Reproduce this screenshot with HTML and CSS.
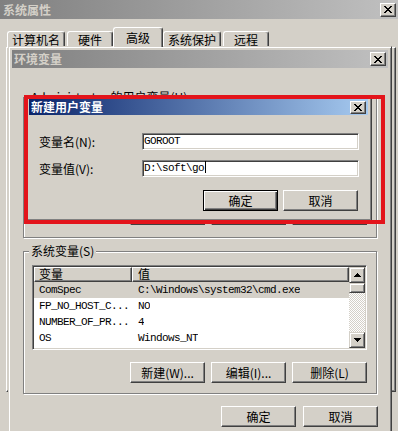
FILE: index.html
```html
<!DOCTYPE html>
<html lang="zh-CN">
<head>
<meta charset="utf-8">
<title>环境变量</title>
<link rel="stylesheet" href="styles.css">
</head>
<body>
<div class="stage">

  <div class="win sysprops">
    <div class="titlebar inactive">
      <span class="title">系统属性</span>
      <span class="xbtn"><svg width="8" height="7" viewBox="0 0 8 7"><path d="M0 0h2v1h-2zM6 0h2v1h-2zM1 1h2v1h-2zM5 1h2v1h-2zM2 2h4v1h-4zM3 3h2v1h-2zM2 4h4v1h-4zM1 5h2v1h-2zM5 5h2v1h-2zM0 6h2v1h-2zM6 6h2v1h-2z" fill="#000"/></svg></span>
    </div>
    <div class="tabs">
      <div class="tab">计算机名</div>
      <div class="tab w2">硬件</div>
      <div class="tab sel">高级</div>
      <div class="tab">系统保护</div>
      <div class="tab w2">远程</div>
    </div>
    <div class="tabpanel"></div>
  </div>

  <div class="win envvars">
    <div class="titlebar inactive">
      <span class="title">环境变量</span>
      <span class="xbtn"><svg width="8" height="7" viewBox="0 0 8 7"><path d="M0 0h2v1h-2zM6 0h2v1h-2zM1 1h2v1h-2zM5 1h2v1h-2zM2 2h4v1h-4zM3 3h2v1h-2zM2 4h4v1h-4zM1 5h2v1h-2zM5 5h2v1h-2zM0 6h2v1h-2zM6 6h2v1h-2z" fill="#000"/></svg></span>
    </div>
    <div class="env-body">
      <fieldset class="group user-group">
        <legend>Administrator 的用户变量(U)</legend>
        <div class="listview">
          <div class="lv-main">
            <div class="lv-head"><div class="col c1">变量</div><div class="col c2">值</div></div>
            <div class="lv-row mono"><span class="c1">TEMP</span><span class="c2">%USERPROFILE%\AppData\Local\Temp</span></div>
            <div class="lv-row mono"><span class="c1">TMP</span><span class="c2">%USERPROFILE%\AppData\Local\Temp</span></div>
          </div>
        </div>
        <div class="btnrow">
          <button class="btn">新建(N)...</button>
          <button class="btn">编辑(E)...</button>
          <button class="btn">删除(D)</button>
        </div>
      </fieldset>

      <fieldset class="group sys-group">
        <legend>系统变量(S)</legend>
        <div class="listview">
          <div class="lv-main">
            <div class="lv-head"><div class="col c1">变量</div><div class="col c2">值</div></div>
            <div class="lv-row mono sel"><span class="c1">ComSpec</span><span class="c2">C:\Windows\system32\cmd.exe</span></div>
            <div class="lv-row mono"><span class="c1">FP_NO_HOST_C...</span><span class="c2">NO</span></div>
            <div class="lv-row mono"><span class="c1">NUMBER_OF_PR...</span><span class="c2">4</span></div>
            <div class="lv-row mono"><span class="c1">OS</span><span class="c2">Windows_NT</span></div>
          </div>
          <div class="vscroll">
            <div class="sb-btn"><svg width="7" height="4" viewBox="0 0 7 4"><path d="M3 0h1v1h-1zM2 1h3v1h-3zM1 2h5v1h-5zM0 3h7v1h-7z" fill="#000"/></svg></div>
            <div class="sb-track"><div class="sb-thumb"></div></div>
            <div class="sb-btn"><svg width="7" height="4" viewBox="0 0 7 4"><path d="M0 0h7v1h-7zM1 1h5v1h-5zM2 2h3v1h-3zM3 3h1v1h-1z" fill="#000"/></svg></div>
          </div>
        </div>
        <div class="btnrow">
          <button class="btn">新建(W)...</button>
          <button class="btn">编辑(I)...</button>
          <button class="btn">删除(L)</button>
        </div>
      </fieldset>

      <div class="env-footer">
        <button class="btn">确定</button>
        <button class="btn">取消</button>
      </div>
    </div>
  </div>

  <div class="win newvar">
    <div class="titlebar active">
      <span class="title">新建用户变量</span>
      <span class="xbtn"><svg width="8" height="7" viewBox="0 0 8 7"><path d="M0 0h2v1h-2zM6 0h2v1h-2zM1 1h2v1h-2zM5 1h2v1h-2zM2 2h4v1h-4zM3 3h2v1h-2zM2 4h4v1h-4zM1 5h2v1h-2zM5 5h2v1h-2zM0 6h2v1h-2zM6 6h2v1h-2z" fill="#000"/></svg></span>
    </div>
    <div class="nv-body">
      <div class="field">
        <label class="field-label">变量名(N):</label>
        <div class="input mono">GOROOT</div>
      </div>
      <div class="field">
        <label class="field-label">变量值(V):</label>
        <div class="input mono">D:\soft\go<span class="caret"></span></div>
      </div>
      <div class="nv-buttons">
        <button class="btn default">确定</button>
        <button class="btn">取消</button>
      </div>
    </div>
  </div>

  <div class="redbox"></div>
</div>
</body>
</html>
```

FILE: styles.css
```css
* { box-sizing: border-box; }
html, body { margin: 0; padding: 0; }
body {
  background: #d4d0c8;
  font-family: "Noto Sans CJK SC", "Liberation Sans", sans-serif;
  font-size: 12px;
  line-height: 14px;
  color: #000;
}
.stage {
  position: relative;
  width: 398px;
  height: 431px;
  overflow: hidden;
}

/* windows */
.win {
  position: absolute;
  display: flex;
  flex-direction: column;
  background: #d4d0c8;
  border: 1px solid;
  border-color: #d4d0c8 #404040 #404040 #d4d0c8;
  box-shadow: inset 1px 1px #fff, inset -1px -1px #808080;
  padding: 3px;
}
.sysprops { left: -4px; top: -4px; width: 406px; height: 450px; }
.envvars { left: 8px; top: 46px; width: 384px; height: 400px; }
.newvar { left: 25px; top: 95px; width: 347px; height: 126px; }

.titlebar {
  flex: none;
  display: flex;
  align-items: center;
  justify-content: space-between;
  height: 18px;
  padding: 0 2px 0 2px;
}
.sysprops .titlebar { height: 19px; padding-left: 3px; }
.newvar .titlebar { height: 16px; }
.titlebar .title { font-weight: bold; line-height: 14px; }
.titlebar.inactive { background: linear-gradient(to right, #808080, #c0c0c0); color: #d4d0c8; }
.titlebar.active { background: linear-gradient(to right, #0a246a, #a6caf0); color: #fff; }

.xbtn {
  width: 16px;
  height: 14px;
  background: #d4d0c8;
  border: 1px solid;
  border-color: #fff #404040 #404040 #fff;
  box-shadow: inset -1px -1px #808080;
  display: flex;
  align-items: center;
  justify-content: center;
}
.newvar .xbtn { height: 13px; }
.xbtn svg, .sb-btn svg { display: block; }

/* tabs */
.tabs {
  flex: none;
  display: flex;
  align-items: flex-end;
  gap: 2px;
  height: 20px;
  margin-top: 8px;
  padding-left: 7px;
}
.tab {
  width: 58px;
  height: 16px;
  border: 1px solid;
  border-bottom: 0;
  border-color: #fff #404040 #fff #fff;
  border-radius: 3px 3px 0 0;
  box-shadow: inset -1px 0 #808080;
  display: flex;
  align-items: center;
  justify-content: center;
}
.tab.w2 { width: 46px; }
.tab.sel {
  width: 50px;
  height: 20px;
  margin: 0 -2px;
  position: relative;
  z-index: 1;
  background: #d4d0c8;
}
.tabpanel {
  flex: none;
  height: 345px;
  margin: 0 2px 0 6px;
  border: 1px solid;
  border-color: #fff #404040 #404040 #fff;
  box-shadow: inset -1px -1px #808080;
}

/* environment dialog body */
.env-body {
  display: flex;
  flex-direction: column;
  padding: 0 11px;
}
.group {
  margin: 0;
  height: 150px;
  min-width: 0;
  border: 1px solid #808080;
  box-shadow: inset 1px 1px #fff, 1px 1px #fff;
  padding: 7px 9px 0 8px;
}
.user-group { margin-top: 22px; height: 148px; padding-top: 3px; }
.sys-group { margin-top: 6px; }
.group legend {
  padding: 0 2px;
  margin-left: -3px;
  background: #d4d0c8;
  line-height: 14px;
}

.mono {
  font-family: "Liberation Mono", "DejaVu Sans Mono", monospace;
  font-size: 11px;
  letter-spacing: -0.6px;
}

.listview {
  display: flex;
  height: 85px;
  border: 1px solid;
  border-color: #808080 #fff #fff #808080;
  box-shadow: inset 1px 1px #404040, inset -1px -1px #d4d0c8;
  padding: 1px;
  background: #fff;
}
.lv-main {
  flex: 1;
  min-width: 0;
  display: flex;
  flex-direction: column;
}
.lv-head { flex: none; display: flex; height: 15px; }
.lv-head .col {
  background: #d4d0c8;
  border: 1px solid;
  border-color: #fff #404040 #404040 #fff;
  box-shadow: inset -1px -1px #808080;
  padding-left: 4px;
  line-height: 12px;
  font-size: 12px;
}
.c1 { width: 98px; flex: none; white-space: nowrap; overflow: hidden; }
.lv-head .c2 { flex: 1; padding-left: 5px; }
.lv-row { flex: none; display: flex; height: 16px; line-height: 16px; }
.lv-row .c1 { padding-left: 5px; }
.lv-row .c2 { padding-left: 6px; white-space: nowrap; overflow: hidden; }
.lv-row.sel { background: #d4d0c8; }

.vscroll { flex: none; width: 16px; display: flex; flex-direction: column; }
.sb-btn, .sb-thumb {
  background: #d4d0c8;
  border: 1px solid;
  border-color: #d4d0c8 #404040 #404040 #d4d0c8;
  box-shadow: inset 1px 1px #fff, inset -1px -1px #808080;
}
.sb-btn {
  flex: none;
  height: 16px;
  display: flex;
  align-items: center;
  justify-content: center;
}
.sb-track {
  flex: 1;
  background: repeating-conic-gradient(#fff 0 25%, #d4d0c8 0 50%) 0 0 / 2px 2px;
}
.sb-thumb { height: 10px; }

/* buttons */
.btnrow {
  display: flex;
  justify-content: flex-end;
  gap: 6px;
  margin-top: 12px;
}
.btn {
  width: 75px;
  height: 21px;
  padding: 0;
  margin: 0;
  font-family: "Noto Sans CJK SC", "Liberation Sans", sans-serif;
  font-size: 12px;
  line-height: 14px;
  color: #000;
  background: #d4d0c8;
  border: 1px solid;
  border-color: #fff #404040 #404040 #fff;
  box-shadow: inset -1px -1px #808080;
  display: flex;
  align-items: center;
  justify-content: center;
}
.btn.default {
  border-color: #000;
  box-shadow: inset 1px 1px #fff, inset -1px -1px #404040, inset -2px -2px #808080;
}
.env-footer {
  display: flex;
  justify-content: flex-end;
  gap: 7px;
  margin-top: 12px;
  margin-right: -1px;
}

/* new user variable dialog */
.nv-body {
  display: flex;
  flex-direction: column;
  padding: 18px 9px 0 10px;
}
.field { display: flex; align-items: center; height: 17px; }
.field + .field { margin-top: 10px; }
.field-label { width: 103px; flex: none; }
.input {
  flex: 1;
  height: 17px;
  background: #fff;
  border: 1px solid;
  border-color: #808080 #fff #fff #808080;
  box-shadow: inset 1px 1px #404040, inset -1px -1px #d4d0c8;
  padding: 0 1px;
  line-height: 15px;
  white-space: nowrap;
}
.caret {
  display: inline-block;
  width: 1px;
  height: 12px;
  margin-left: 1px;
  background: #000;
  vertical-align: -2px;
}
.nv-buttons {
  display: flex;
  justify-content: flex-end;
  gap: 5px;
  margin-top: 13px;
  margin-right: 1px;
}

/* highlight annotation */
.redbox {
  position: absolute;
  left: 24px;
  top: 95px;
  width: 361px;
  height: 129px;
  border: 4px solid #e3141b;
}
```
